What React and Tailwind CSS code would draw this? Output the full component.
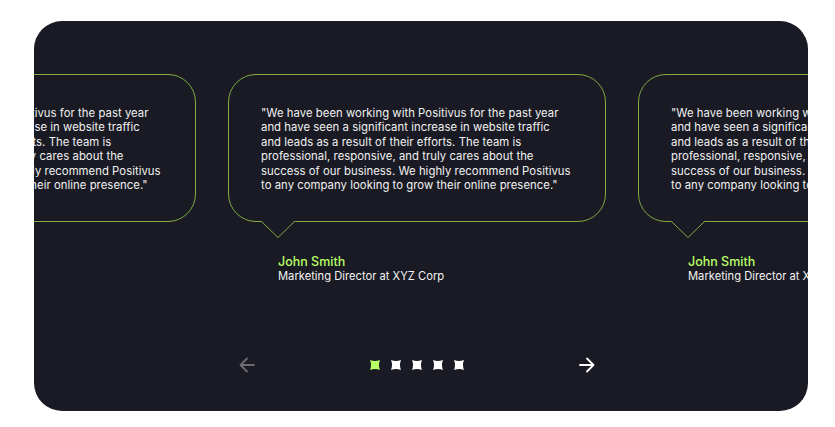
import React from 'react';

const quote =
  '"We have been working with Positivus for the past year and have seen a significant increase in website traffic and leads as a result of their efforts. The team is professional, responsive, and truly cares about the success of our business. We highly recommend Positivus to any company looking to grow their online presence."';

const testimonials = [0, 1, 2].map((i) => ({
  id: i,
  text: quote,
  name: 'John Smith',
  role: 'Marketing Director at XYZ Corp',
}));

function Sparkle({ active }) {
  return (
    <svg width="10" height="10" viewBox="0 0 10 10">
      <path
        d="M0 0 Q5 2 10 0 Q8 5 10 10 Q5 8 0 10 Q2 5 0 0Z"
        fill={active ? '#B9FF66' : '#FFFFFF'}
      />
    </svg>
  );
}

function Arrow({ dir, color }) {
  const d = dir === 'left' ? 'M15 8H1.5M8 1.5L1.5 8L8 14.5' : 'M1 8H14.5M8 1.5L14.5 8L8 14.5';
  return (
    <svg width="16" height="16" viewBox="0 0 16 16" fill="none">
      <path d={d} stroke={color} strokeWidth="1.8" strokeLinecap="round" strokeLinejoin="round" />
    </svg>
  );
}

function Card({ item }) {
  return (
    <div className="w-[378px] shrink-0">
      <div className="relative">
        <div className="rounded-[28px] border border-[#7fae45] pl-[32px] pr-[33px] py-[31px] h-[148px]">
          <p className="text-[11.3px] leading-[14.4px] tracking-[0.05px] text-[#f2f2f2]">{item.text}</p>
        </div>
        {/* speech tail */}
        <svg
          className="absolute left-[33px] top-[146px]"
          width="34"
          height="19"
          viewBox="0 0 34 19"
          fill="none"
        >
          <path d="M0 1.5 L17 18 L34 1.5" fill="#191A23" />
          <path d="M0.5 1.5 L17 17.5 L33.5 1.5" stroke="#7fae45" strokeWidth="1" />
          <rect x="1.5" y="0" width="31" height="2" fill="#191A23" />
        </svg>
      </div>
      <div className="pl-[50px] pt-[32px]">
        <div className="text-[12.5px] leading-[15px] font-medium text-[#B9FF66]">{item.name}</div>
        <div className="text-[11.2px] leading-[15px] text-[#f2f2f2]">{item.role}</div>
      </div>
    </div>
  );
}

export default function App() {
  const active = 0;

  return (
    <div className="min-h-screen bg-white pt-[21px] pl-[34px]" style={{ fontFamily: 'Inter, "Noto Sans", sans-serif' }}>
      <div className="w-[774px] h-[390px] rounded-[28px] bg-[#191A23] overflow-hidden flex flex-col">
        <div className="flex gap-[32px] ml-[-216px] pt-[53px]">
          {testimonials.map((t) => (
            <Card key={t.id} item={t} />
          ))}
        </div>

        <div className="flex items-center justify-between w-[356px] ml-[205px] mt-[73px]">
          <button className="flex items-center">
            <Arrow dir="left" color="#6b6b70" />
          </button>
          <div className="flex items-center gap-[11px]">
            {[0, 1, 2, 3, 4].map((i) => (
              <Sparkle key={i} active={i === active} />
            ))}
          </div>
          <button className="flex items-center">
            <Arrow dir="right" color="#FFFFFF" />
          </button>
        </div>
      </div>
    </div>
  );
}
